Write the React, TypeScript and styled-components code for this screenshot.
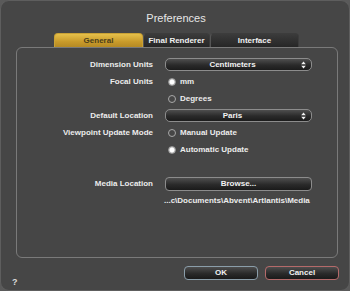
import styled, { createGlobalStyle } from "styled-components";

const GlobalStyle = createGlobalStyle`
  html, body {
    margin: 0;
    padding: 0;
    background: #5a5a5a;
  }
  body {
    font-family: "Liberation Sans", Arial, sans-serif;
  }
`;

const Window = styled.div`
  box-sizing: border-box;
  width: 350px;
  height: 291px;
  background: #464646;
  border: 1px solid #5e5e5e;
  border-radius: 9px;
  display: flex;
  flex-direction: column;
  overflow: hidden;
`;

const Title = styled.div`
  margin-top: 10px;
  height: 14px;
  line-height: 14px;
  text-align: center;
  font-size: 11px;
  color: #e6e6e6;
  padding-left: 2px;
`;

const Tabs = styled.div`
  display: flex;
  justify-content: center;
  margin-top: 8px;
  padding-left: 3px;
`;

const Tab = styled.div<{ $active?: boolean; $w: number }>`
  box-sizing: border-box;
  width: ${(p) => p.$w}px;
  height: 14px;
  line-height: 14px;
  text-align: center;
  font-size: 8px;
  font-weight: bold;
  border-radius: 4px 4px 0 0;
  border: 1px solid ${(p) => (p.$active ? "#c9a236" : "#3c3c3c")};
  border-bottom: none;
  color: ${(p) => (p.$active ? "#4a3d1a" : "#f0f0f0")};
  background: ${(p) =>
    p.$active
      ? "linear-gradient(#e6c04a, #c89a2a 60%, #b58a24)"
      : "linear-gradient(#3b3b3b, #262626)"};
  & + & {
    border-left: 1px solid #555;
  }
`;

const Panel = styled.div`
  box-sizing: border-box;
  margin: 0 11px 0 15px;
  height: 211px;
  border: 1px solid #7a7a7a;
  border-radius: 6px;
  padding: 8px 25px 0 0;
`;

const Form = styled.div`
  display: grid;
  grid-template-columns: 1fr 147px;
  grid-auto-rows: 17px;
  column-gap: 12px;
  align-items: center;
`;

const Label = styled.div`
  text-align: right;
  font-size: 8px;
  font-weight: bold;
  color: #ececec;
  white-space: nowrap;
`;

const Select = styled.div`
  box-sizing: border-box;
  height: 13px;
  border: 1px solid #8c8c8c;
  border-radius: 5px;
  background: linear-gradient(#4e4e4e, #2a2a2a 55%, #1c1c1c);
  display: flex;
  align-items: center;
  padding: 0 5px 0 10px;
  font-size: 8px;
  font-weight: bold;
  color: #f2f2f2;
`;

const SelectText = styled.span<{ $center?: boolean }>`
  flex: 1;
  text-align: center;
  padding-left: ${(p) => (p.$center ? "0" : "0")};
  margin-left: ${(p) => (p.$center ? "0" : "-12px")};
`;

const Button = styled.div<{ $tint?: string }>`
  box-sizing: border-box;
  height: 14px;
  line-height: 12px;
  text-align: center;
  border: 1px solid ${(p) => p.$tint || "#8c8c8c"};
  border-radius: 4px;
  background: linear-gradient(#4e4e4e, #2a2a2a 55%, #1a1a1a);
  font-size: 8px;
  font-weight: bold;
  color: #f2f2f2;
`;

const RadioRow = styled.div`
  display: flex;
  align-items: center;
  gap: 4px;
  padding-left: 3px;
  font-size: 8px;
  font-weight: bold;
  color: #ececec;
`;

const Radio = styled.span<{ $on?: boolean }>`
  box-sizing: border-box;
  width: 8px;
  height: 8px;
  border-radius: 50%;
  border: 1px solid ${(p) => (p.$on ? "#9a9a9a" : "#a8a8a8")};
  background: ${(p) =>
    p.$on ? "radial-gradient(circle, #ffffff 45%, #bdbdbd 75%)" : "transparent"};
`;

const Path = styled.div`
  font-size: 8px;
  font-weight: bold;
  color: #ececec;
  white-space: nowrap;
  margin-left: -1px;
`;

const Footer = styled.div`
  display: flex;
  align-items: center;
  margin: 8px 10px 0 11px;
  height: 14px;
`;

const Help = styled.div`
  font-size: 9px;
  font-weight: bold;
  color: #dcdcdc;
  margin-top: 17px;
  flex: 1;
`;

const FooterButtons = styled.div`
  display: flex;
  gap: 7px;
  & > * {
    width: 74px;
  }
`;

function Arrows() {
  return (
    <svg width="5" height="8" viewBox="0 0 5 8">
      <path d="M2.5 0.5 L4.8 3.2 L0.2 3.2 Z" fill="#f2f2f2" />
      <path d="M2.5 7.5 L4.8 4.8 L0.2 4.8 Z" fill="#f2f2f2" />
    </svg>
  );
}

export default function App() {
  return (
    <>
      <GlobalStyle />
      <Window>
        <Title>Preferences</Title>
        <Tabs>
          <Tab $active $w={89}>
            General
          </Tab>
          <Tab $w={67}>Final Renderer</Tab>
          <Tab $w={89}>Interface</Tab>
        </Tabs>
        <Panel>
          <Form>
            <Label>Dimension Units</Label>
            <Select>
              <SelectText>Centimeters</SelectText>
              <Arrows />
            </Select>

            <Label>Focal Units</Label>
            <RadioRow>
              <Radio $on />
              mm
            </RadioRow>

            <span />
            <RadioRow>
              <Radio />
              Degrees
            </RadioRow>

            <Label>Default Location</Label>
            <Select>
              <SelectText>Paris</SelectText>
              <Arrows />
            </Select>

            <Label>Viewpoint Update Mode</Label>
            <RadioRow>
              <Radio />
              Manual Update
            </RadioRow>

            <span />
            <RadioRow>
              <Radio $on />
              Automatic Update
            </RadioRow>

            <span />
            <span />

            <Label>Media Location</Label>
            <Button>Browse...</Button>

            <span />
            <Path>...c\Documents\Abvent\Artlantis\Media</Path>
          </Form>
        </Panel>
        <Footer>
          <Help>?</Help>
          <FooterButtons>
            <Button $tint="#8b9eaa">OK</Button>
            <Button $tint="#b56a6a">Cancel</Button>
          </FooterButtons>
        </Footer>
      </Window>
    </>
  );
}
